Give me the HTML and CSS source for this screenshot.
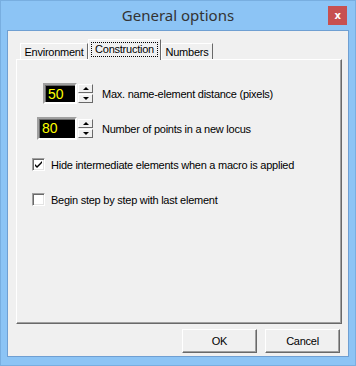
FILE: index.html
```html
<!DOCTYPE html>
<html lang="en">
<head>
  <meta charset="UTF-8">
  <title>General options</title>
  <link rel="stylesheet" href="styles.css">
</head>
<body>
  <div class="window">
    <div class="titlebar">
      <span></span>
      <span class="title">General options</span>
      <span class="close-wrap"><span class="close">x</span></span>
    </div>
    <div class="client">
      <div class="tabs">
        <div class="tab env">Environment</div>
        <div class="tab active"><span class="focus">Construction</span></div>
        <div class="tab nums">Numbers</div>
      </div>
      <div class="panel">
        <div class="row row-first">
          <div class="spin">
            <div class="field narrow">50</div>
            <div class="arrows">
              <div class="arrow"><span class="up"></span></div>
              <div class="arrow"><span class="down"></span></div>
            </div>
          </div>
          <span class="label">Max. name-element distance (pixels)</span>
        </div>
        <div class="row row-second">
          <div class="spin">
            <div class="field wide">80</div>
            <div class="arrows">
              <div class="arrow"><span class="up"></span></div>
              <div class="arrow"><span class="down"></span></div>
            </div>
          </div>
          <span class="label">Number of points in a new locus</span>
        </div>
        <label class="check check-first">
          <span class="box checked">
            <svg width="9" height="9" viewBox="0 0 9 9"><path d="M1 4 L3 6 L8 1 L8 3 L3 8 L1 6 Z" fill="#000"/></svg>
          </span>
          Hide intermediate elements when a macro is applied
        </label>
        <label class="check check-second">
          <span class="box"></span>
          Begin step by step with last element
        </label>
      </div>
      <div class="buttons">
        <button type="button">OK</button>
        <button type="button">Cancel</button>
      </div>
    </div>
  </div>
</body>
</html>
```

FILE: styles.css
```css
body {
  margin: 0;
  background: #8cc4f5;
  font-family: "Liberation Sans", Arial, sans-serif;
  font-size: 11px;
  letter-spacing: -0.25px;
  color: #000;
}
.window {
  width: 356px;
  height: 366px;
  box-sizing: border-box;
  background: #8cc4f5;
  border: 1px solid #78aee0;
}
.titlebar {
  height: 29px;
  display: grid;
  grid-template-columns: 1fr auto 1fr;
  align-items: start;
}
.title {
  font-family: "Noto Sans", "Open Sans", sans-serif;
  font-size: 15px;
  letter-spacing: 0;
  color: #333;
  padding-top: 4px;
}
.close-wrap {
  display: flex;
  justify-content: flex-end;
  padding-right: 8px;
  padding-top: 5px;
}
.close {
  width: 19px;
  height: 19px;
  background: #c75050;
  color: #fff;
  font-family: "DejaVu Sans", sans-serif;
  font-weight: bold;
  font-size: 10px;
  display: flex;
  align-items: center;
  justify-content: center;
}
.client {
  margin: 0 6px;
  height: 327px;
  box-sizing: border-box;
  background: #f0f0f0;
  border: 1px solid #6f9fd2;
  padding: 8px 6px 0 8px;
}
.tabs {
  display: flex;
  align-items: flex-end;
  height: 20px;
  padding-left: 4px;
}
.tab {
  box-sizing: border-box;
  height: 16px;
  padding-top: 1px;
  border: 1px solid #fff;
  border-right-color: #696969;
  border-bottom: none;
  line-height: 14px;
  text-align: center;
}
.env {
  width: 68px;
}
.nums {
  width: 52px;
}
.tab.active {
  width: 73px;
  height: 21px;
  padding: 2px 2px 0 2px;
  margin-bottom: -1px;
  background: #f0f0f0;
  position: relative;
  z-index: 1;
}
.focus {
  display: block;
  border: 1px dotted #000;
  line-height: 13px;
}
.panel {
  height: 265px;
  box-sizing: border-box;
  border: 1px solid #fff;
  border-right-color: #696969;
  border-bottom-color: #696969;
  box-shadow: inset -1px -1px 0 #a0a0a0;
  display: flex;
  flex-direction: column;
}
.row {
  display: flex;
  align-items: center;
}
.row-first {
  margin-top: 23px;
  padding-left: 26px;
}
.row-second {
  margin-top: 13px;
  padding-left: 20px;
}
.spin {
  display: flex;
  align-items: center;
  gap: 1px;
}
.field {
  box-sizing: border-box;
  background: #000;
  color: #ffff00;
  font-size: 14px;
  letter-spacing: 0;
  line-height: 16px;
  border: 2px solid #a0a0a0;
  border-right-color: #fff;
  border-bottom-color: #fff;
  box-shadow: inset 1px 1px 0 #696969;
  padding: 1px 0 0 3px;
}
.narrow {
  width: 34px;
  height: 21px;
}
.wide {
  width: 40px;
  height: 23px;
}
.arrows {
  display: flex;
  flex-direction: column;
  width: 15px;
}
.arrow {
  height: 9px;
  margin-bottom: 1px;
  box-sizing: border-box;
  background: #f0f0f0;
  border: 1px solid #fff;
  border-right-color: #696969;
  border-bottom-color: #696969;
  display: flex;
  align-items: center;
  justify-content: center;
}
.up, .down {
  width: 0;
  height: 0;
  border-left: 3px solid transparent;
  border-right: 3px solid transparent;
}
.up {
  border-bottom: 3px solid #000;
}
.down {
  border-top: 3px solid #000;
}
.label {
  margin-left: 9px;
}
.check {
  display: flex;
  align-items: center;
  gap: 6px;
  padding-left: 15px;
  height: 13px;
}
.check-first {
  margin-top: 18px;
}
.check-second {
  margin-top: 22px;
}
.box {
  width: 13px;
  height: 13px;
  box-sizing: border-box;
  background: #fff;
  border: 1px solid #a0a0a0;
  border-right-color: #fff;
  border-bottom-color: #fff;
  box-shadow: inset 1px 1px 0 #696969, inset -1px -1px 0 #e3e3e3;
  display: flex;
  align-items: center;
  justify-content: center;
}
.buttons {
  display: flex;
  justify-content: flex-end;
  gap: 8px;
  margin-top: 5px;
  padding-right: 2px;
}
button {
  width: 75px;
  height: 24px;
  font-family: "Liberation Sans", Arial, sans-serif;
  font-size: 11px;
  letter-spacing: -0.25px;
  background: #f0f0f0;
  border: 1px solid #fff;
  border-right-color: #696969;
  border-bottom-color: #696969;
  box-shadow: inset -1px -1px 0 #a0a0a0;
  padding: 0;
}
```
